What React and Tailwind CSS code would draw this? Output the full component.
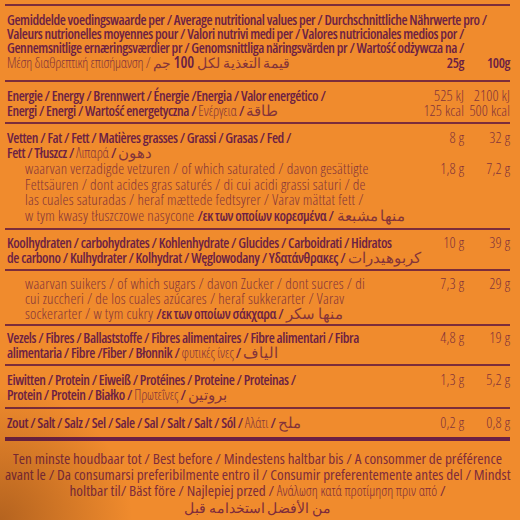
const B = ({ children }) => <span className="font-semibold text-[#6c2144]">{children}</span>;
const L = ({ children }) => <span className="font-light text-[15px] tracking-[0.2px] text-[#84343a]">{children}</span>;
const G = ({ children }) => <span className="font-light tracking-[-0.1px] text-[#84343a]">{children}</span>;

function Row({ children, a, b, sub, strong }) {
  return (
    <div className="flex items-baseline">
      <div className={sub ? "flex-1 min-w-0 whitespace-nowrap pl-[18px]" : "flex-1 min-w-0 whitespace-nowrap"}>{children}</div>
      {a && (
        <>
          <div className={strong ? "w-[60px] text-right font-semibold text-[#6c2144]" : "w-[60px] text-right font-light text-[15px] tracking-[0.1px] text-[#84343a]"}>{a}</div>
          <div className={strong ? "w-[46px] text-right font-semibold text-[#6c2144]" : "w-[46px] text-right font-light text-[15px] tracking-[0.1px] text-[#84343a]"}>{b}</div>
        </>
      )}
    </div>
  );
}

function Section({ children, className }) {
  return <div className={"border-b-2 border-[#7b2d3b] leading-[15px] " + className}>{children}</div>;
}

export default function App() {
  return (
    <div className="relative w-[520px] h-[520px] overflow-hidden bg-[#f08b2d] font-['Open_Sans',sans-serif] font-stretch-condensed text-[14px] tracking-[-0.4px]">
      <div className="pt-[4px] pl-[5px] pr-[10px]">
        <div className="border-t-2 border-[#7b2d3b]" />
        <div className="border-b-2 border-[#7b2d3b] pt-[7px] pb-[10px] leading-[14px] pl-[2px]">
          <Row><B>Gemiddelde voedingswaarde per / Average nutritional values per / Durchschnittliche Nährwerte pro /</B></Row>
          <Row><B>Valeurs nutrionelles moyennes pour / Valori nutrivi medi per / Valores nutricionales medios por /</B></Row>
          <Row><B>Gennemsnitlige ernæringsværdier pr / Genomsnittliga näringsvärden pr / Wartość odżywcza na /</B></Row>
          <Row a="25g" b="100g" strong>
            <span className="font-light tracking-[-0.2px] text-[#84343a]">Μέση διαθρεπτική επισήμανση / قيمة التغذية لكل </span>
            <span className="font-semibold text-[15.5px] text-[#6c2144]">100</span>
            <span className="font-light text-[#84343a]"> جم</span>
          </Row>
        </div>

        <Section className="pt-[6px] pb-[4px] pl-[2px]">
          <Row a="525 kJ" b="2100 kJ"><B>Energie / Energy / Brennwert / Énergie  /Energia / Valor energético /</B></Row>
          <Row a="125 kcal" b="500 kcal"><B>Energi / Energi / Wartość energetyczna / </B><G>Ενέργεια</G><B> / </B><L>طاقة</L></Row>
        </Section>

        <Section className="pt-[6px] pb-[5px] pl-[2px]">
          <Row a="8 g" b="32 g"><B>Vetten / Fat / Fett / Matières grasses / Grassi / Grasas / Fed /</B></Row>
          <Row><B>Fett / Tłuszcz / </B><G>Λιπαρά</G><B> / </B><L>دهون</L></Row>
          <div className="mt-[1px] leading-[15.5px]">
            <Row sub a="1,8 g" b="7,2 g"><L>waarvan verzadigde vetzuren / of which saturated / davon gesättigte</L></Row>
            <Row sub><L>Fettsäuren / dont acides gras saturés / di cui acidi grassi saturi / de</L></Row>
            <Row sub><L>las cuales saturadas / heraf mættede fedtsyrer / Varav mättat fett /</L></Row>
            <Row sub><L>w tym kwasy tłuszczowe nasycone </L><B>/εκ των οποίων κορεσμένα /</B><L> منها مشبعة</L></Row>
          </div>
        </Section>

        <Section className="pt-[5px] pb-[4px] pl-[2px]">
          <Row a="10 g" b="39 g"><B>Koolhydraten / carbohydrates / Kohlenhydrate / Glucides / Carboidrati / Hidratos</B></Row>
          <Row><B>de carbono / Kulhydrater / Kolhydrat / Węglowodany / Υδατάνθρακες /</B><L> كربوهيدرات</L></Row>
        </Section>

        <Section className="pt-[5px] pb-[3px] pl-[2px] leading-[15px]">
          <Row sub a="7,3 g" b="29 g"><L>waarvan suikers / of which sugars / davon Zucker / dont sucres / di</L></Row>
          <Row sub><L>cui zuccheri  / de los cuales azúcares / heraf sukkerarter / Varav</L></Row>
          <Row sub><L>sockerarter / w tym cukry </L><B>/εκ των οποίων σάκχαρα /</B><L> منها سكر</L></Row>
        </Section>

        <Section className="pt-[4px] pb-[4px] pl-[2px]">
          <Row a="4,8 g" b="19 g"><B>Vezels / Fibres / Ballaststoffe / Fibres alimentaires / Fibre alimentari / Fibra</B></Row>
          <Row><B>alimentaria / Fibre /Fiber / Błonnik / </B><G>φυτικές ίνες</G><B> / </B><L>الياف</L></Row>
        </Section>

        <Section className="pt-[6px] pb-[5px] pl-[2px]">
          <Row a="1,3 g" b="5,2 g"><B>Eiwitten / Protein / Eiweiß / Protéines / Proteine / Proteinas /</B></Row>
          <Row><B>Protein / Protein / Białko / </B><G>Πρωτεΐνες</G><B> / </B><L>بروتين</L></Row>
        </Section>

        <div className="border-b-4 border-[#6c2144] pt-[6px] pb-[7px] pl-[2px] leading-[15px]">
          <Row a="0,2 g" b="0,8 g"><B>Zout / Salt / Salz / Sel / Sale / Sal / Salt / Salt / Sól / </B><G>Αλάτι</G><B> / </B><L>ملح</L></Row>
        </div>

        <div className="pt-[9px] text-center leading-[16px] text-[15.2px] tracking-[0px] text-[#7e2c3c] whitespace-nowrap">
          <div>Ten minste houdbaar tot / Best before / Mindestens haltbar bis / A consommer de préférence</div>
          <div>avant le / Da consumarsi preferibilmente entro il / Consumir preferentemente antes del / Mindst</div>
          <div>holtbar til/ Bäst före  / Najlepiej przed / <span className="font-light text-[14px]">Ανάλωση κατά προτίμηση πριν από</span> /</div>
          <div className="font-light text-[13.5px] mt-[1px]">من الأفضل استخدامه قبل</div>
        </div>
      </div>
      <div className="pointer-events-none absolute inset-0 bg-[radial-gradient(ellipse_at_0%_100%,rgba(70,25,5,0.35),transparent_18%)]" />
    </div>
  );
}
